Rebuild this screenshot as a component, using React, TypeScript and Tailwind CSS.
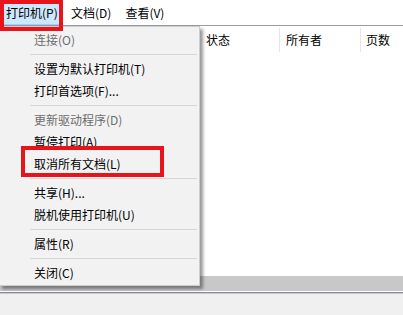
import React from "react";

type MenuEntry = { label?: string; disabled?: boolean; sep?: boolean };

const menuItems: MenuEntry[] = [
  { label: "连接(O)", disabled: true },
  { sep: true },
  { label: "设置为默认打印机(T)" },
  { label: "打印首选项(F)..." },
  { sep: true },
  { label: "更新驱动程序(D)", disabled: true },
  { label: "暂停打印(A)" },
  { label: "取消所有文档(L)" },
  { sep: true },
  { label: "共享(H)..." },
  { label: "脱机使用打印机(U)" },
  { sep: true },
  { label: "属性(R)" },
  { sep: true },
  { label: "关闭(C)" },
];

export default function App() {
  return (
    <div className="relative w-[403px] h-[315px] overflow-hidden bg-white text-[12px] text-black font-['Noto_Sans_CJK_SC',sans-serif] flex flex-col">
      {/* Menu bar */}
      <div className="h-[25px] flex items-stretch">
        <div className="mt-[1px] w-[62px] pl-[5px] flex items-center bg-[#cce8ff] border border-[#99d1ff]">打印机(P)</div>
        <div className="pl-[9px] pr-[6px] flex items-center">文档(D)</div>
        <div className="pl-[8px] pr-[6px] flex items-center">查看(V)</div>
      </div>

      {/* List view */}
      <div className="flex-1 border-t border-[#9a9aa6] flex flex-col">
        <div className="h-[27px] flex items-center">
          <div className="w-[199px] h-[24px] border-r border-[#e5e5e5]"></div>
          <div className="w-[81px] h-[24px] pl-[7px] flex items-center border-r border-[#e5e5e5]">状态</div>
          <div className="w-[81px] h-[24px] pl-[6px] flex items-center border-r border-[#e5e5e5]">所有者</div>
          <div className="flex-1 h-[24px] pl-[5px] flex items-center">页数</div>
        </div>
      </div>

      <div className="h-[15px] bg-[#c8c8c8]"></div>
      <div className="h-[1px] bg-white"></div>
      <div className="h-[1px] bg-[#8a8a98]"></div>
      <div className="h-[1px] bg-[#c9c9d2]"></div>
      <div className="h-[21px] bg-[#f0f0f0]"></div>

      {/* Dropdown menu */}
      <div className="absolute left-[-1px] top-[26px] w-[201px] bg-[#f2f2f2] border border-[#cccccc] pt-[2px] pb-[1px] shadow-[3px_3px_3px_rgba(0,0,0,0.4)]">
        {menuItems.map((item, i) =>
          item.sep ? (
            <div key={i} className="h-[7px] flex items-center pl-[30px] pr-[2px]">
              <div className="h-[1px] w-full bg-[#d7d7d7]"></div>
            </div>
          ) : (
            <div
              key={i}
              className={`h-[22px] pl-[34px] flex items-center whitespace-nowrap ${item.disabled ? "text-[#6d6d6d]" : ""}`}
            >
              {item.label}
            </div>
          )
        )}
      </div>

      {/* Annotation boxes */}
      <div className="absolute left-0 top-0 w-[63px] h-[31px] border-[4px] border-[#e8141c] pointer-events-none"></div>
      <div className="absolute left-[21px] top-[146px] w-[143px] h-[31px] border-[4px] border-[#e8141c] pointer-events-none"></div>
    </div>
  );
}
